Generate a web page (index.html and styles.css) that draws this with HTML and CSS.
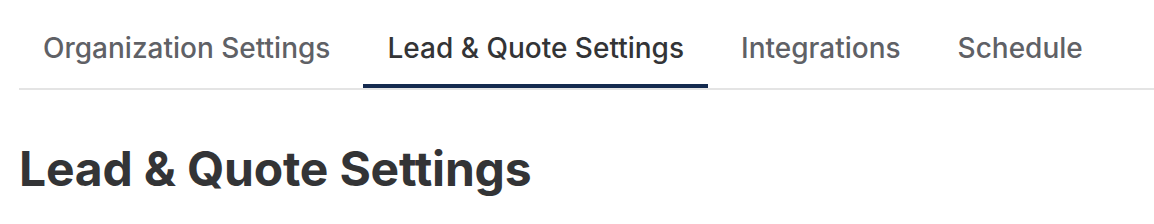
FILE: index.html
```html
<!DOCTYPE html>
<html lang="en">
<head>
    <meta charset="UTF-8">
    <meta name="viewport" content="width=device-width, initial-scale=1.0">
    <title>Settings</title>
    <link rel="stylesheet" href="styles.css">
</head>
<body>
    <div class="page">
        <nav class="tabs">
            <a class="tab">Organization Settings</a>
            <a class="tab active">Lead &amp; Quote Settings</a>
            <a class="tab">Integrations</a>
            <a class="tab">Schedule</a>
        </nav>

        <h1 class="page-title">Lead &amp; Quote Settings</h1>
    </div>
</body>
</html>
```

FILE: styles.css
```css
:root {
    --navy: #142a4f;
    --text: #333436;
    --muted: #5f6166;
    --line: #e4e4e4;
}

body {
    font-family: Inter, 'Noto Sans', sans-serif;
    background-color: #fff;
    color: var(--text);
    margin: 0;
    padding: 0;
}

.page {
    padding-left: 19px;
}

.tabs {
    display: flex;
    gap: 9px;
    border-bottom: 2px solid var(--line);
}

.tab {
    padding: 33px 24px 21px;
    line-height: 30px;
    font-size: 28px;
    font-weight: 500;
    color: var(--muted);
    border-bottom: 4px solid transparent;
    cursor: pointer;
}

.tab.active {
    color: var(--text);
    border-bottom-color: var(--navy);
}

.page-title {
    margin: 0;
    padding-top: 51px;
    font-size: 48px;
    line-height: 56px;
    font-weight: 700;
    letter-spacing: -0.2px;
    color: var(--text);
}
```
